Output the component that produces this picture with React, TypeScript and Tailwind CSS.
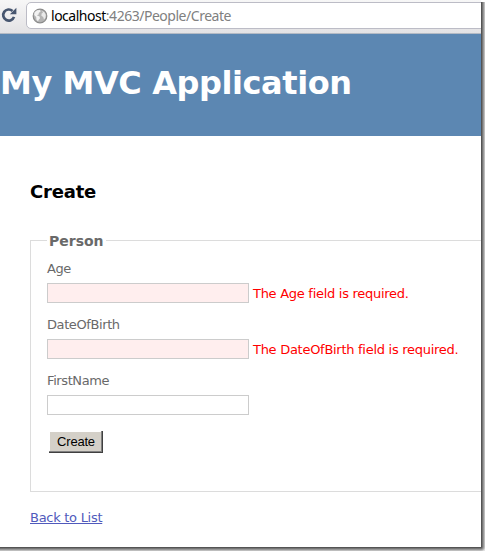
import type { ReactNode } from "react";

function ReloadIcon() {
  return (
    <svg width="16" height="16" viewBox="0 0 15 15" className="ml-px shrink-0">
      <path d="M12.2 9.2A5.2 5.2 0 1 1 10.8 3.7" fill="none" stroke="#47566f" strokeWidth="2.5" />
      <path d="M14.4 0.8V6.9H8.3Z" fill="#47566f" />
    </svg>
  );
}

function GlobeIcon() {
  return (
    <svg width="16" height="16" viewBox="0 0 16 16" className="shrink-0">
      <circle cx="8" cy="8" r="6.8" fill="#b4b4b4" stroke="#8b8b8b" strokeWidth="1.2" />
      <path d="M2.5 4.2L5 2.2L8 2L8.6 3.6L6.8 5L6.6 6.6L4.8 7.2L7.6 8.6L8 10.2L6.6 12L6 13.6L4.4 11.4L4.2 9L2.2 7Z" fill="#f2f2f2" />
      <path d="M10 3L12.4 4.2L13.8 7L13.4 10L12 11.6L11.2 9L9.4 7.8L9.6 5.6L11 4.8Z" fill="#eaeaea" />
    </svg>
  );
}

function Field({ label, error, children }: { label: string; error?: string; children?: ReactNode }) {
  return (
    <div className="h-14">
      <label className="block h-[27px] text-[13px] leading-[26px] tracking-[-0.4px]">{label}</label>
      <div className="flex h-5 items-center">
        <input
          aria-label={label}
          className={`h-5 w-[202px] shrink-0 border border-[#ccc] outline-none ${error ? "bg-[#ffeeee]" : "bg-white"}`}
        />
        {error && <span className="ml-1 pt-px text-[13px] leading-[21px] whitespace-nowrap text-[#ff0000] tracking-[-0.28px]">{error}</span>}
      </div>
      {children}
    </div>
  );
}

export default function App() {
  return (
    <div className="flex h-[551px] w-[485px] flex-col overflow-hidden bg-white font-['DejaVu_Sans',Verdana,sans-serif] text-[#696969]">
      <div className="flex h-[547px]">
        <div className="h-full w-[481px] overflow-hidden">
          <div className="flex h-[34px] items-start border-b border-[#b4bac4] bg-linear-to-b from-[#f7f7f7] to-[#e3e2e4]">
            <div className="mt-[7px]">
              <ReloadIcon />
            </div>
            <div className="mt-[2px] ml-[9px] flex h-[27px] w-[480px] shrink-0 items-center rounded-[5px] border border-[#bcbcc6] bg-white pl-[5px]">
              <GlobeIcon />
              <span className="ml-[3px] font-['Noto_Sans',sans-serif] text-[14px] leading-5 tracking-[-0.48px] whitespace-nowrap text-[#808080]">
                <span className="text-black">localhost</span>:4263/People/Create
              </span>
            </div>
          </div>
          <header className="h-[102px] bg-[#5c87b2] pt-[29px]">
            <h1 className="text-[32px] leading-10 font-bold tracking-[-0.42px] whitespace-nowrap text-white">My MVC Application</h1>
          </header>
          <main className="pt-11 pl-[30px]">
            <h2 className="h-6 text-[18px] leading-6 font-bold tracking-[-0.2px] text-black">Create</h2>
            <section className="mt-9 h-[252px] w-[480px] border border-[#dcdcdc] pl-4">
              <div className="-mt-[12px] h-[21px]">
                <span className="inline-block bg-white px-[2px] text-[14px] leading-[19px] font-bold">Person</span>
              </div>
              <div className="mt-[6px]">
                <Field label="Age" error="The Age field is required." />
                <Field label="DateOfBirth" error="The DateOfBirth field is required." />
                <Field label="FirstName" />
              </div>
              <button className="mt-[7px] ml-[2px] block h-[22px] w-[54px] border-r border-b border-[#404040] bg-[#d4d0c8] pt-px pl-px font-['Liberation_Sans',Arial,sans-serif] text-[13px] leading-5 tracking-[-0.2px] text-black shadow-[inset_-1px_-1px_#808080,inset_1px_1px_#ffffff]">
                Create
              </button>
            </section>
            <a href="#" className="mt-4 block w-max text-[13px] leading-5 tracking-[-0.28px] text-[#505abc] underline">Back to List</a>
          </main>
        </div>
        <div className="mt-[2px] w-1 bg-linear-to-r from-[#444444] to-[#d0d0d0]" />
      </div>
      <div className="flex h-1">
        <div className="w-[481px] bg-linear-to-b from-[#444444] to-[#d0d0d0]" />
        <div className="w-1 bg-radial-[at_0%_0%] from-[#444444] to-[#e4e4e4] to-80%" />
      </div>
    </div>
  );
}
